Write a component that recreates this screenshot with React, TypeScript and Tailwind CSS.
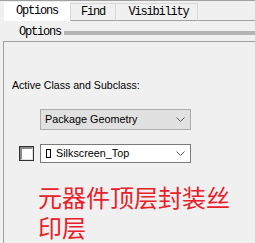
export default function App() {
  const mono = { fontFamily: '"Liberation Mono", "DejaVu Sans Mono", monospace' };
  const sans = { fontFamily: '"Liberation Sans", Arial, sans-serif' };

  const Chevron = () => (
    <svg width="9" height="5" viewBox="0 0 9 5" className="shrink-0">
      <path d="M0.5 0.5 L4.5 4.5 L8.5 0.5" fill="none" stroke="#5a5a5a" strokeWidth="1" />
    </svg>
  );

  return (
    <div className="flex h-[243px] w-[255px] flex-col overflow-hidden bg-[#f0f0f0]">
      <div className="h-px bg-[#a0a0a0]" />

      {/* tabs */}
      <div className="flex h-[20px] items-end pl-[4px]" style={mono}>
        <div className="flex h-[19px] w-[66px] items-center justify-center bg-white pb-[2px] text-[12px] tracking-[-1.2px] text-black">
          Options
        </div>
        <div className="flex h-[18px] w-[46px] items-center justify-center border border-[#d9d9d9] border-b-[#a0a0a0] pb-[1px] text-[12px] tracking-[-1.2px] text-black">
          Find
        </div>
        <div className="flex h-[18px] w-[82px] items-center justify-center border border-l-0 border-[#d9d9d9] border-b-[#a0a0a0] pb-[1px] pl-[4px] text-[12px] tracking-[-1.2px] text-black">
          Visibility
        </div>
        <div className="h-px flex-1 bg-[#a0a0a0]" />
      </div>

      {/* group label */}
      <div className="flex h-[20px] items-start pl-[19px] pt-[4px]" style={mono}>
        <span className="text-[12px] leading-[14px] tracking-[-1.2px] text-black">Options</span>
        <div className="ml-[3px] mt-[6px] h-[4px] flex-1 bg-[#b4b4b4]" />
      </div>

      {/* group box */}
      <div className="ml-[3px] flex flex-1 flex-col border-l border-t border-[#a0a0a0]" style={sans}>
        <div className="mt-[37px] pl-[8px] text-[10.6px] leading-[13px] text-black">
          Active Class and Subclass:
        </div>

        <div className="ml-[36px] mt-[17px] flex h-[21px] w-[151px] items-center justify-between border border-[#adadad] bg-[#e1e1e1] pl-[4px] pr-[5px]">
          <span className="text-[10.8px] text-black">Package Geometry</span>
          <Chevron />
        </div>

        <div className="mt-[14px] flex items-center">
          <div className="ml-[15px] flex h-[15px] w-[15px] border border-[#303030]">
            <div className="flex-1 border-l-2 border-t-2 border-[#8a8a8a] border-b border-r border-b-[#e0e0e0] border-r-[#e0e0e0] bg-white" />
          </div>
          <div className="ml-[6px] flex h-[19px] w-[151px] items-center justify-between border border-[#7a7a7a] bg-white pl-[5px] pr-[5px]">
            <span className="flex items-center text-[10.8px] text-black">
              <span className="inline-block h-[9px] w-[5px] border border-black" />
              <span className="ml-[5px]">Silkscreen_Top</span>
            </span>
            <Chevron />
          </div>
        </div>

        <div
          className="ml-[34px] mt-[19px] w-[200px] text-[24px] leading-[30px] text-[#e8202a]"
          style={{ fontFamily: '"Noto Sans CJK SC", "Liberation Sans", sans-serif' }}
        >
          元器件顶层封装丝印层
        </div>
      </div>
    </div>
  );
}
